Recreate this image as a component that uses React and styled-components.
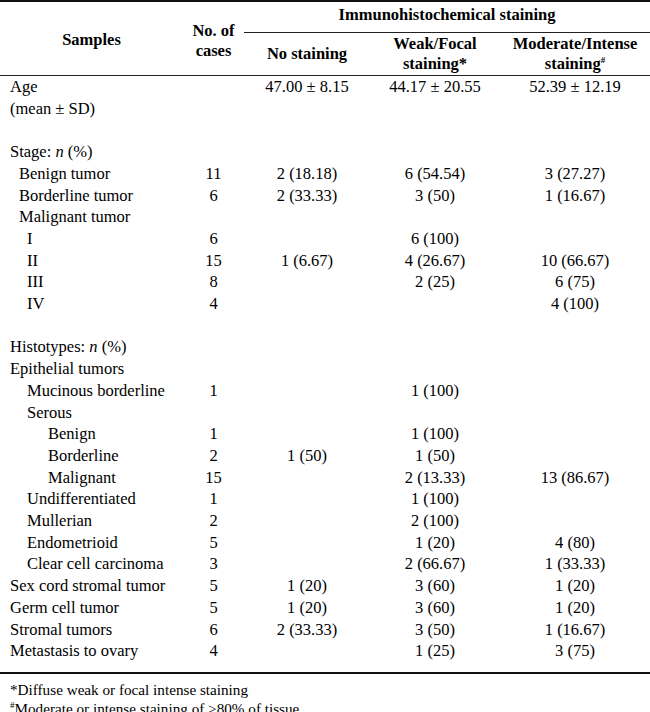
import styled, { createGlobalStyle } from 'styled-components';

const GlobalStyle = createGlobalStyle`
  html, body {
    margin: 0;
    padding: 0;
    background: #fff;
  }
  body {
    font-family: "Liberation Serif", "Times New Roman", serif;
    color: #000;
  }
`;

const Page = styled.div`
  width: 650px;
`;

const Table = styled.table`
  width: 650px;
  table-layout: fixed;
  border-collapse: separate;
  border-spacing: 0;
  font-size: 16.5px;
  border-top: 2px solid #111;
`;

const HeadCell = styled.th`
  font-weight: bold;
  text-align: center;
  vertical-align: middle;
  padding: ${({ $top }) => $top || 0}px 0 0;
  line-height: 20px;
  border-bottom: 1px solid #222;
`;

const GroupCell = styled(HeadCell)`
  height: 26px;
  padding: 0 0 4px;
`;

const BodyRow = styled.tr`
  height: 21.7px;
`;

const Label = styled.td`
  padding: 0 0 ${({ $last }) => ($last ? '10px' : '0')} ${({ $indent }) => 10 + $indent}px;
  line-height: 21.7px;
  white-space: nowrap;
  border-bottom: ${({ $last }) => ($last ? '2px solid #111' : 'none')};
`;

const Value = styled.td`
  padding: 0 0 ${({ $last }) => ($last ? '10px' : '0')};
  line-height: 21.7px;
  text-align: center;
  white-space: nowrap;
  border-bottom: ${({ $last }) => ($last ? '2px solid #111' : 'none')};
`;

const Notes = styled.div`
  padding: 6px 0 0 10px;
  font-size: 15.2px;
  line-height: 19px;
`;

const Sup = styled.sup`
  font-size: 9px;
  line-height: 0;
  vertical-align: 6px;
`;

const N = styled.i``;

const rows = [
  { label: 'Age', indent: 0, count: '', v: ['47.00 ± 8.15', '44.17 ± 20.55', '52.39 ± 12.19'] },
  { label: '(mean ± SD)', indent: 0 },
  { label: '', indent: 0 },
  { label: <>Stage: <N>n</N> (%)</>, indent: 0 },
  { label: 'Benign tumor', indent: 9, count: '11', v: ['2 (18.18)', '6 (54.54)', '3 (27.27)'] },
  { label: 'Borderline tumor', indent: 9, count: '6', v: ['2 (33.33)', '3 (50)', '1 (16.67)'] },
  { label: 'Malignant tumor', indent: 9 },
  { label: 'I', indent: 17, count: '6', v: ['', '6 (100)', ''] },
  { label: 'II', indent: 17, count: '15', v: ['1 (6.67)', '4 (26.67)', '10 (66.67)'] },
  { label: 'III', indent: 17, count: '8', v: ['', '2 (25)', '6 (75)'] },
  { label: 'IV', indent: 17, count: '4', v: ['', '', '4 (100)'] },
  { label: '', indent: 0 },
  { label: <>Histotypes: <N>n</N> (%)</>, indent: 0 },
  { label: 'Epithelial tumors', indent: 0 },
  { label: 'Mucinous borderline', indent: 17, count: '1', v: ['', '1 (100)', ''] },
  { label: 'Serous', indent: 17 },
  { label: 'Benign', indent: 38, count: '1', v: ['', '1 (100)', ''] },
  { label: 'Borderline', indent: 38, count: '2', v: ['1 (50)', '1 (50)', ''] },
  { label: 'Malignant', indent: 38, count: '15', v: ['', '2 (13.33)', '13 (86.67)'] },
  { label: 'Undifferentiated', indent: 17, count: '1', v: ['', '1 (100)', ''] },
  { label: 'Mullerian', indent: 17, count: '2', v: ['', '2 (100)', ''] },
  { label: 'Endometrioid', indent: 17, count: '5', v: ['', '1 (20)', '4 (80)'] },
  { label: 'Clear cell carcinoma', indent: 17, count: '3', v: ['', '2 (66.67)', '1 (33.33)'] },
  { label: 'Sex cord stromal tumor', indent: 0, count: '5', v: ['1 (20)', '3 (60)', '1 (20)'] },
  { label: 'Germ cell tumor', indent: 0, count: '5', v: ['1 (20)', '3 (60)', '1 (20)'] },
  { label: 'Stromal tumors', indent: 0, count: '6', v: ['2 (33.33)', '3 (50)', '1 (16.67)'] },
  { label: 'Metastasis to ovary', indent: 0, count: '4', v: ['', '1 (25)', '3 (75)'] },
];

export default function App() {
  return (
    <Page>
      <GlobalStyle />
      <Table>
        <colgroup>
          <col style={{ width: 183 }} />
          <col style={{ width: 61 }} />
          <col style={{ width: 126 }} />
          <col style={{ width: 130 }} />
          <col style={{ width: 150 }} />
        </colgroup>
        <thead>
          <tr>
            <HeadCell rowSpan={2} $top={2}>Samples</HeadCell>
            <HeadCell rowSpan={2} $top={4}>No. of<br />cases</HeadCell>
            <GroupCell colSpan={3}>Immunohistochemical staining</GroupCell>
          </tr>
          <tr style={{ height: 43 }}>
            <HeadCell>No staining</HeadCell>
            <HeadCell>Weak/Focal<br />staining*</HeadCell>
            <HeadCell>Moderate/Intense<br />staining<Sup>#</Sup></HeadCell>
          </tr>
        </thead>
        <tbody>
          {rows.map((r, i) => {
            const last = i === rows.length - 1;
            const v = r.v || ['', '', ''];
            return (
              <BodyRow key={i}>
                <Label $indent={r.indent} $last={last}>{r.label}</Label>
                <Value $last={last}>{r.count}</Value>
                <Value $last={last}>{v[0]}</Value>
                <Value $last={last}>{v[1]}</Value>
                <Value $last={last}>{v[2]}</Value>
              </BodyRow>
            );
          })}
        </tbody>
      </Table>
      <Notes>
        <div>*Diffuse weak or focal intense staining</div>
        <div><Sup>#</Sup>Moderate or intense staining of &gt;80% of tissue</div>
      </Notes>
    </Page>
  );
}
